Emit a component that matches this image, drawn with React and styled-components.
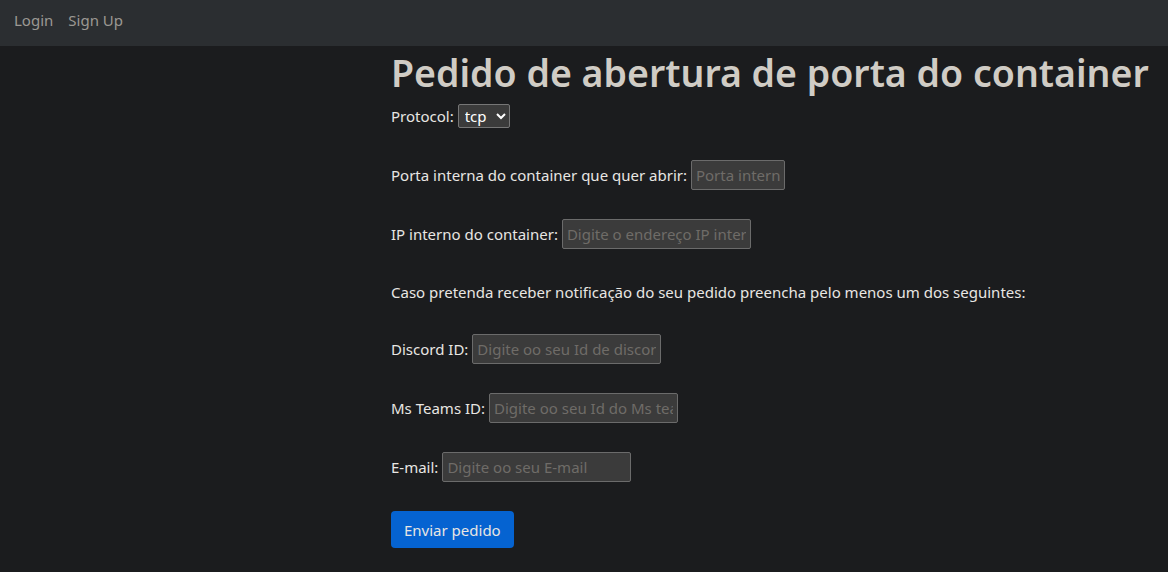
import React from "react";
import styled, { createGlobalStyle } from "styled-components";

const GlobalStyle = createGlobalStyle`
  body {
    margin: 0;
    background-color: #1b1c1e;
    color: #e8e6e3;
    font-family: "Noto Sans", "Open Sans", sans-serif;
    font-size: 15px;
  }
`;

const Navbar = styled.nav`
  display: flex;
  align-items: center;
  gap: 15px;
  box-sizing: border-box;
  height: 46px;
  padding: 0 14px 6px;
  background-color: #2b2e31;
`;

const NavLink = styled.a`
  color: #9b9893;
  text-decoration: none;
  font-size: 15px;
  cursor: pointer;
`;

const Main = styled.main`
  padding-left: 391px;
`;

const Title = styled.h1`
  margin: 3px 0 5px;
  font-size: 37.5px;
  font-weight: 600;
  line-height: 47px;
  color: #d0ccc5;
  white-space: nowrap;
`;

const Form = styled.form`
  display: flex;
  flex-direction: column;
  align-items: flex-start;
  gap: 29px;
`;

const Row = styled.div`
  display: flex;
  align-items: center;
  gap: 4px;
  height: ${(p) => p.$h || 30}px;
`;

const Select = styled.select`
  height: 24px;
  width: 52px;
  padding: 0 2px;
  background-color: #3b3b3b;
  color: #ffffff;
  border: 1px solid #767676;
  border-radius: 2px;
  font-family: inherit;
  font-size: 15px;
`;

const Input = styled.input`
  box-sizing: border-box;
  height: 30px;
  width: ${(p) => p.$w || 189}px;
  padding: 0 4px;
  background-color: #3b3b3b;
  color: #e8e6e3;
  border: 1px solid #6b6b6b;
  border-radius: 2px;
  font-family: inherit;
  font-size: 15px;
  &::placeholder {
    color: #6f6c68;
  }
`;

const Button = styled.button`
  height: 37px;
  padding: 0 13px;
  background-color: #0563d1;
  color: #e8e6e3;
  border: none;
  border-radius: 4px;
  font-family: inherit;
  font-size: 15px;
  cursor: pointer;
`;

export default function App() {
  return (
    <>
      <GlobalStyle />
      <Navbar>
        <NavLink>Login</NavLink>
        <NavLink>Sign Up</NavLink>
      </Navbar>
      <Main>
        <Title>Pedido de abertura de porta do container</Title>
        <Form onSubmit={(e) => e.preventDefault()}>
          <Row>
            Protocol:
            <Select defaultValue="tcp">
              <option value="tcp">tcp</option>
              <option value="udp">udp</option>
            </Select>
          </Row>
          <Row>
            Porta interna do container que quer abrir:
            <Input $w={94} placeholder="Porta interna" />
          </Row>
          <Row>
            IP interno do container:
            <Input placeholder="Digite o endereço IP interno" />
          </Row>
          <Row $h={27}>
            Caso pretenda receber notificação do seu pedido preencha pelo menos um dos seguintes:
          </Row>
          <Row>
            Discord ID:
            <Input placeholder="Digite oo seu Id de discord" />
          </Row>
          <Row>
            Ms Teams ID:
            <Input placeholder="Digite oo seu Id do Ms teams" />
          </Row>
          <Row>
            E-mail:
            <Input placeholder="Digite oo seu E-mail" />
          </Row>
          <Button type="submit">Enviar pedido</Button>
        </Form>
      </Main>
    </>
  );
}
